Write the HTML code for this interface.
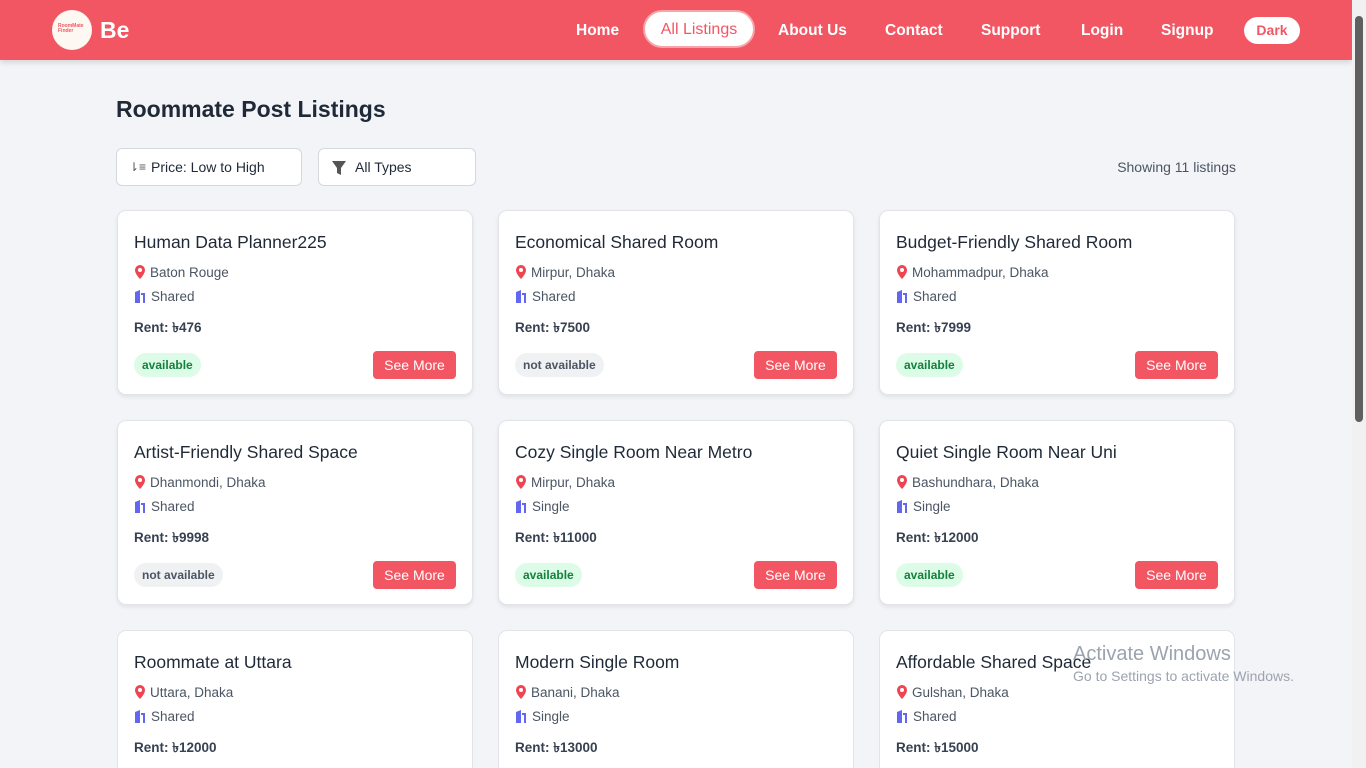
<!DOCTYPE html>
<html style="overflow:hidden;height:768px"><head><meta charset="utf-8"><style>
*{box-sizing:border-box;margin:0;padding:0}
body{width:1366px;height:768px;overflow:hidden;background:#f3f4f8;font-family:"Liberation Sans",sans-serif;color:#1f2937;position:relative}
#wrap{position:absolute;left:0;top:0;width:1366px;height:768px;overflow:hidden}
.nav{position:absolute;left:0;top:0;width:1352px;height:60px;background:#f25663;box-shadow:0 2px 6px rgba(0,0,0,.15)}
.logo{position:absolute;left:52px;top:10px;width:40px;height:40px;border-radius:50%;background:#fdf8f2;color:#f25663;font-size:5px;font-weight:bold;padding:14px 0 0 6px;line-height:5px}
.be{position:absolute;left:100px;top:17px;color:#fff;font-weight:900;font-size:23px}
.nav a{position:absolute;top:22px;color:#fff;font-weight:bold;font-size:15.5px;text-decoration:none}
.act{position:absolute;left:643px;top:10px;width:112px;height:38px;border-radius:19px;background:#fff;border:2px solid #f7a4aa;color:#f25663;font-size:16px;text-align:center;line-height:36px}
.dark{position:absolute;left:1244px;top:17px;width:56px;height:27px;border-radius:14px;background:#fff;color:#f25663;font-weight:bold;font-size:14px;text-align:center;line-height:27px}
.sb{position:absolute;left:1352px;top:0;width:14px;height:768px;background:#f1f1f1}
.sb div{position:absolute;left:3px;top:16px;width:8px;height:406px;border-radius:4px;background:#5f5f5f}
h1{position:absolute;left:116px;top:96px;font-size:23px;font-weight:bold}
.sel{position:absolute;top:148px;height:38px;background:#fff;border:1px solid #d6d8dd;border-radius:6px;font-size:14px;line-height:36px;padding-left:34px}
.show{position:absolute;right:130px;top:159px;font-size:14px;color:#4b5563}
.card{position:absolute;width:356px;height:185px;background:#fff;border:1px solid #e2e4e8;border-radius:9px;box-shadow:0 2px 4px rgba(0,0,0,.08)}
.card h3{position:absolute;left:16px;top:21px;font-size:17.5px;font-weight:500}
.l{position:absolute;left:16px;font-size:13.5px;color:#4b5563}
.l svg{vertical-align:-2px;margin-right:4px}
.r{position:absolute;left:16px;top:106px;font-size:13.5px;font-weight:bold;color:#374151}
.b{position:absolute;left:16px;top:142px;height:24px;border-radius:12px;padding:0 8px;font-size:12px;font-weight:bold;line-height:24px}
.av{background:#dcfce7;color:#15803d}.na{background:#f0f1f3;color:#4b5563}
.btn{position:absolute;right:16px;top:140px;width:83px;height:28px;background:#f25663;color:#fff;border-radius:4px;font-size:14px;text-align:center;line-height:28px}
.win{position:absolute;left:1073px;top:643px;color:#9ca3af;font-size:20px}
.win2{position:absolute;left:1073px;top:668px;color:#9ca3af;font-size:14px}
</style></head><body>
<div id="wrap">
<div class="nav">
<div class="logo">RoomMate<br>Finder</div><div class="be">Be</div>
<a style="left:576px">Home</a>
<div class="act">All Listings</div>
<a style="left:778px">About Us</a>
<a style="left:885px">Contact</a>
<a style="left:981px">Support</a>
<a style="left:1081px">Login</a>
<a style="left:1161px">Signup</a>
<div class="dark">Dark</div>
</div>
<div class="sb"><div></div></div>
<h1>Roommate Post Listings</h1>
<div class="sel" style="left:116px;width:186px"><span style="position:absolute;left:12px;top:0;font-size:12px;color:#555">⇂≡</span>Price: Low to High</div>
<div class="sel" style="left:318px;width:158px;padding-left:36px"><svg style="position:absolute;left:12px;top:11px" width="16" height="16" viewBox="0 0 16 16"><path d="M1 1h14l-5 7v7l-4-2V8z" fill="#555"/></svg>All Types</div>
<div class="show">Showing 11 listings</div>
<div id="c"></div>
<div class="win">Activate Windows</div>
<div class="win2">Go to Settings to activate Windows.</div>
</div>
<script>
var d=[["Human Data Planner225","Baton Rouge","Shared","476",1],["Economical Shared Room","Mirpur, Dhaka","Shared","7500",0],["Budget-Friendly Shared Room","Mohammadpur, Dhaka","Shared","7999",1],["Artist-Friendly Shared Space","Dhanmondi, Dhaka","Shared","9998",0],["Cozy Single Room Near Metro","Mirpur, Dhaka","Single","11000",1],["Quiet Single Room Near Uni","Bashundhara, Dhaka","Single","12000",1],["Roommate at Uttara","Uttara, Dhaka","Shared","12000",1],["Modern Single Room","Banani, Dhaka","Single","13000",1],["Affordable Shared Space","Gulshan, Dhaka","Shared","15000",1]];
var h="";d.forEach(function(x,i){var l=117+(i%3)*381,t=210+Math.floor(i/3)*210,last=i>5;
h+='<div class="card" style="left:'+l+'px;top:'+t+'px'+(last?';height:140px;border-bottom:none;border-radius:9px 9px 0 0;box-shadow:none':'')+'"><h3>'+x[0]+'</h3><div class="l" style="top:54px"><svg width="12" height="14" viewBox="0 0 12 14"><path d="M6 0a5 5 0 0 1 5 5c0 4-5 9-5 9S1 9 1 5a5 5 0 0 1 5-5z" fill="#ef4452"/><circle cx="6" cy="5" r="2" fill="#fff"/></svg>'+x[1]+'</div><div class="l" style="top:78px"><svg width="13" height="13" viewBox="0 0 13 13"><path d="M1 13V2l5-2v13zM7 3h4v10h-2V5H7z" fill="#6366f1"/></svg>'+x[2]+'</div><div class="r">Rent: ৳'+x[3]+'</div>'+(last?'':'<div class="b '+(x[4]?'av">available':'na">not available')+'</div><div class="btn">See More</div>')+'</div>'});
document.getElementById("c").innerHTML=h;
</script>
</body></html>
